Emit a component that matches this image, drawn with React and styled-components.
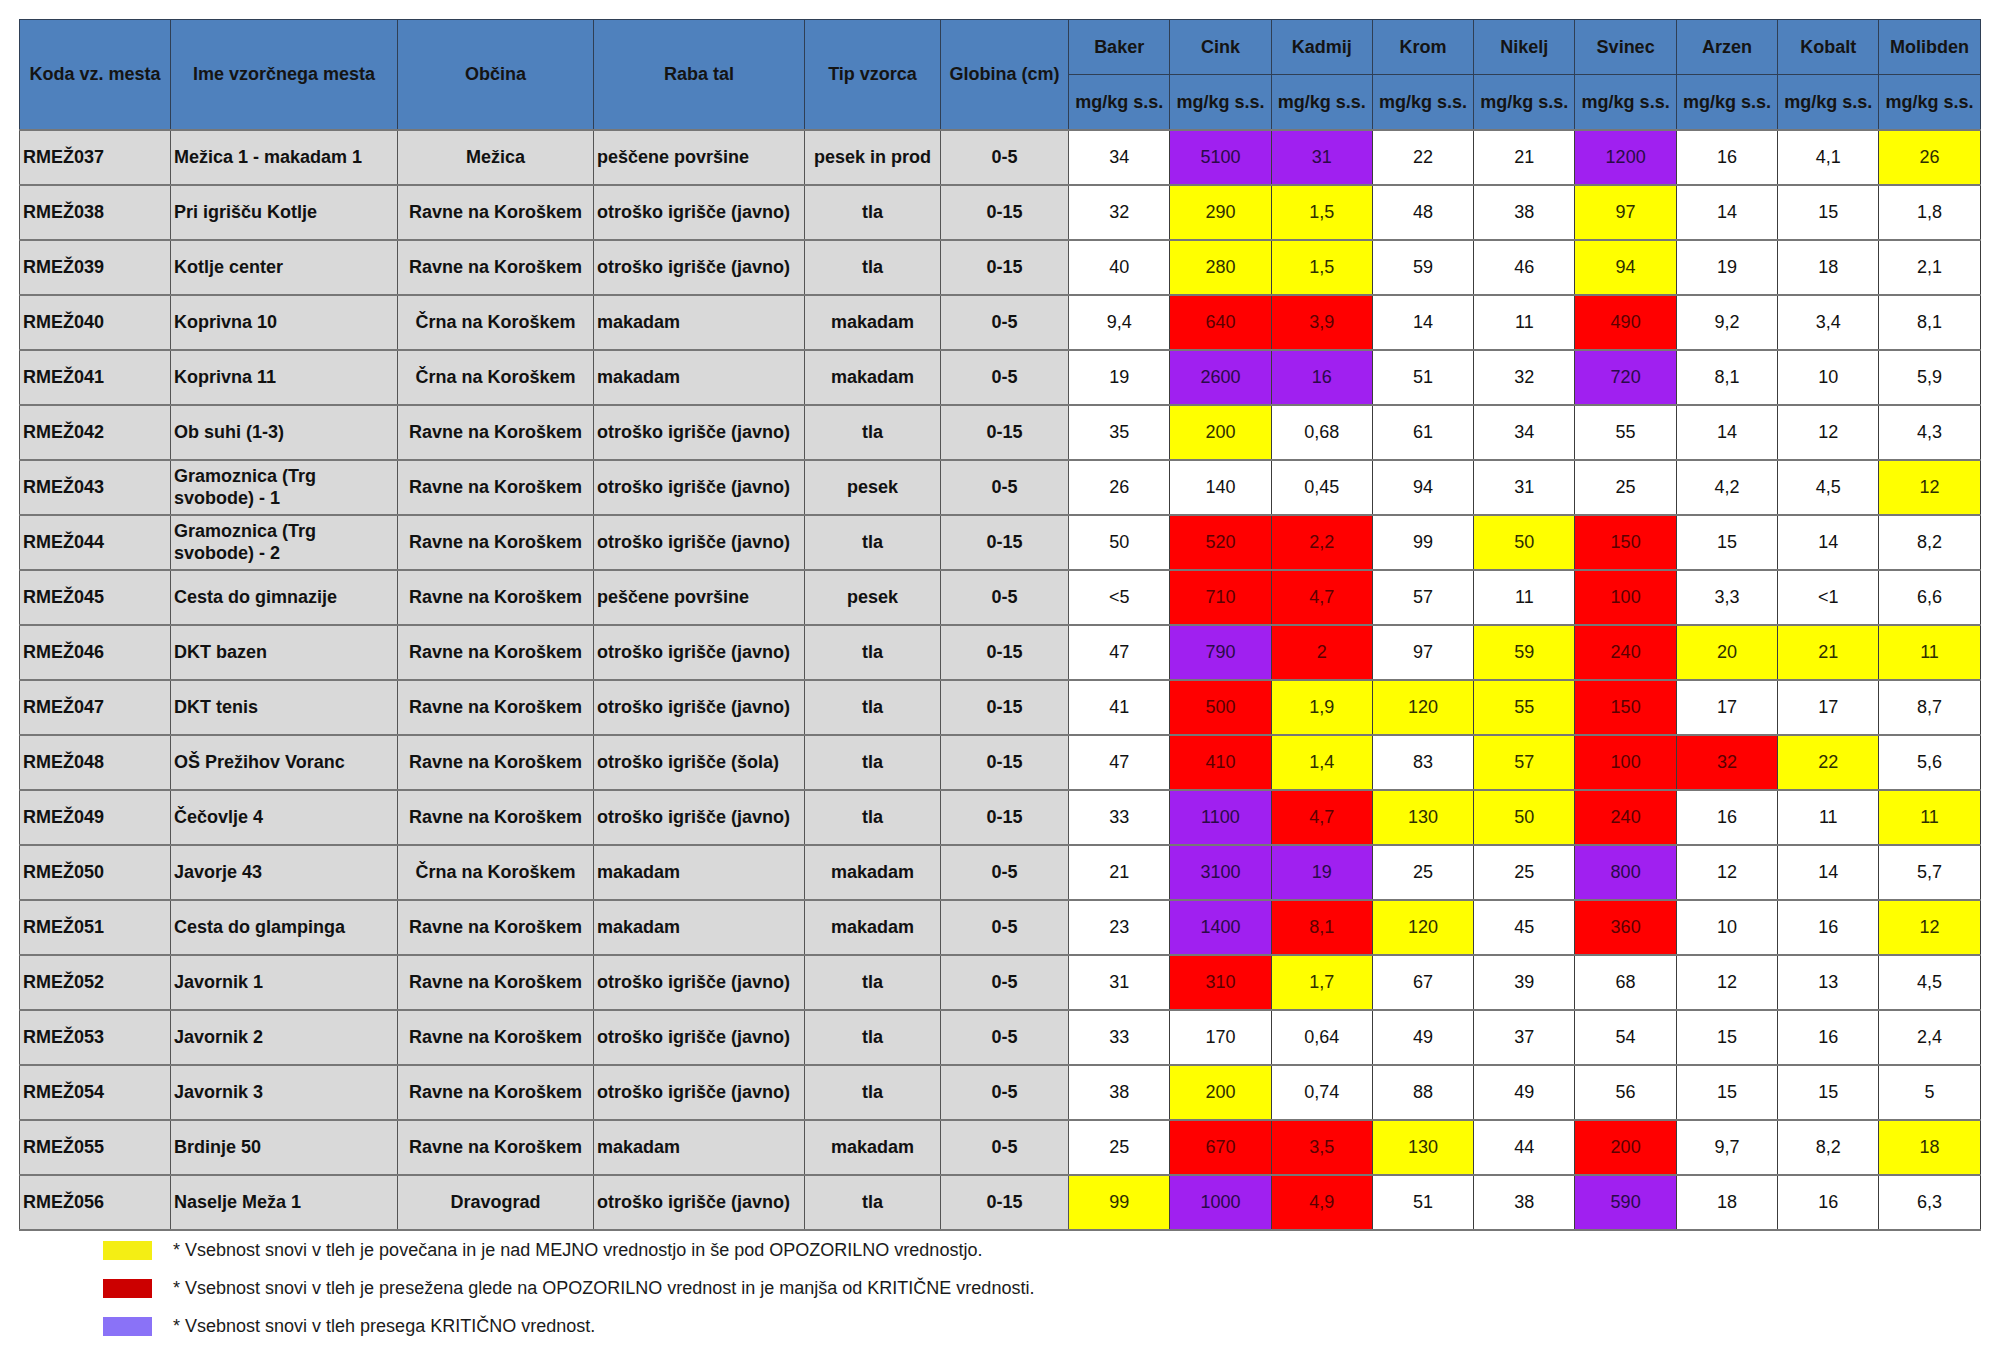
import styled, { createGlobalStyle } from "styled-components";

const GlobalStyle = createGlobalStyle`
  body {
    margin: 0;
    background: #ffffff;
    font-family: "Liberation Sans", Arial, sans-serif;
    color: #111;
  }
`;

const ELEMENTS = ["Baker", "Cink", "Kadmij", "Krom", "Nikelj", "Svinec", "Arzen", "Kobalt", "Molibden"];

const R = "Ravne na Koroškem";
const C = "Črna na Koroškem";
const OI = "otroško igrišče (javno)";

// value suffix: :y = over MEJNO, :r = over OPOZORILNO, :p = over KRITIČNO
const rows = [
  ["RMEŽ037", "Mežica 1 - makadam 1", "Mežica", "peščene površine", "pesek in prod", "0-5", "34 5100:p 31:p 22 21 1200:p 16 4,1 26:y"],
  ["RMEŽ038", "Pri igrišču Kotlje", R, OI, "tla", "0-15", "32 290:y 1,5:y 48 38 97:y 14 15 1,8"],
  ["RMEŽ039", "Kotlje center", R, OI, "tla", "0-15", "40 280:y 1,5:y 59 46 94:y 19 18 2,1"],
  ["RMEŽ040", "Koprivna 10", C, "makadam", "makadam", "0-5", "9,4 640:r 3,9:r 14 11 490:r 9,2 3,4 8,1"],
  ["RMEŽ041", "Koprivna 11", C, "makadam", "makadam", "0-5", "19 2600:p 16:p 51 32 720:p 8,1 10 5,9"],
  ["RMEŽ042", "Ob suhi (1-3)", R, OI, "tla", "0-15", "35 200:y 0,68 61 34 55 14 12 4,3"],
  ["RMEŽ043", "Gramoznica (Trg svobode) - 1", R, OI, "pesek", "0-5", "26 140 0,45 94 31 25 4,2 4,5 12:y"],
  ["RMEŽ044", "Gramoznica (Trg svobode) - 2", R, OI, "tla", "0-15", "50 520:r 2,2:r 99 50:y 150:r 15 14 8,2"],
  ["RMEŽ045", "Cesta do gimnazije", R, "peščene površine", "pesek", "0-5", "<5 710:r 4,7:r 57 11 100:r 3,3 <1 6,6"],
  ["RMEŽ046", "DKT bazen", R, OI, "tla", "0-15", "47 790:p 2:r 97 59:y 240:r 20:y 21:y 11:y"],
  ["RMEŽ047", "DKT tenis", R, OI, "tla", "0-15", "41 500:r 1,9:y 120:y 55:y 150:r 17 17 8,7"],
  ["RMEŽ048", "OŠ Prežihov Voranc", R, "otroško igrišče (šola)", "tla", "0-15", "47 410:r 1,4:y 83 57:y 100:r 32:r 22:y 5,6"],
  ["RMEŽ049", "Čečovlje 4", R, OI, "tla", "0-15", "33 1100:p 4,7:r 130:y 50:y 240:r 16 11 11:y"],
  ["RMEŽ050", "Javorje 43", C, "makadam", "makadam", "0-5", "21 3100:p 19:p 25 25 800:p 12 14 5,7"],
  ["RMEŽ051", "Cesta do glampinga", R, "makadam", "makadam", "0-5", "23 1400:p 8,1:r 120:y 45 360:r 10 16 12:y"],
  ["RMEŽ052", "Javornik 1", R, OI, "tla", "0-5", "31 310:r 1,7:y 67 39 68 12 13 4,5"],
  ["RMEŽ053", "Javornik 2", R, OI, "tla", "0-5", "33 170 0,64 49 37 54 15 16 2,4"],
  ["RMEŽ054", "Javornik 3", R, OI, "tla", "0-5", "38 200:y 0,74 88 49 56 15 15 5"],
  ["RMEŽ055", "Brdinje 50", R, "makadam", "makadam", "0-5", "25 670:r 3,5:r 130:y 44 200:r 9,7 8,2 18:y"],
  ["RMEŽ056", "Naselje Meža 1", "Dravograd", OI, "tla", "0-15", "99:y 1000:p 4,9:r 51 38 590:p 18 16 6,3"],
];

const App = () => {
  return (
    <Page>
      <GlobalStyle />
      <Table>
        <colgroup>
          <col style={{ width: 151 }} />
          <col style={{ width: 227 }} />
          <col style={{ width: 196 }} />
          <col style={{ width: 211 }} />
          <col style={{ width: 136 }} />
          <col style={{ width: 128 }} />
          {ELEMENTS.map((e) => (
            <col key={e} style={{ width: 101.3 }} />
          ))}
        </colgroup>
        <thead>
          <tr>
            <HeadCell rowSpan={2}>Koda vz. mesta</HeadCell>
            <HeadCell rowSpan={2}>Ime vzorčnega mesta</HeadCell>
            <HeadCell rowSpan={2}>Občina</HeadCell>
            <HeadCell rowSpan={2}>Raba tal</HeadCell>
            <HeadCell rowSpan={2}>Tip vzorca</HeadCell>
            <HeadCell rowSpan={2}>Globina (cm)</HeadCell>
            {ELEMENTS.map((e) => (
              <HeadCell key={e}>{e}</HeadCell>
            ))}
          </tr>
          <tr>
            {ELEMENTS.map((e) => (
              <HeadCell key={e}>mg/kg s.s.</HeadCell>
            ))}
          </tr>
        </thead>
        <tbody>
          {rows.map((r) => (
            <Row key={r[0]}>
              <InfoCell>{r[0]}</InfoCell>
              <InfoCell>{r[1]}</InfoCell>
              <InfoCell $center>{r[2]}</InfoCell>
              <InfoCell>{r[3]}</InfoCell>
              <InfoCell $center>{r[4]}</InfoCell>
              <InfoCell $center>{r[5]}</InfoCell>
              {r[6].split(" ").map((v, i) => {
                const [num, level] = v.split(":");
                return (
                  <ValueCell key={i} $level={level}>
                    {num}
                  </ValueCell>
                );
              })}
            </Row>
          ))}
        </tbody>
      </Table>

      <Legend>
        <LegendRow>
          <Swatch $color="#f4ee14" />
          <LegendText>* Vsebnost snovi v tleh je povečana in je nad MEJNO vrednostjo in še pod OPOZORILNO vrednostjo.</LegendText>
        </LegendRow>
        <LegendRow>
          <Swatch $color="#cc0000" />
          <LegendText>* Vsebnost snovi v tleh je presežena glede na OPOZORILNO vrednost in je manjša od KRITIČNE vrednosti.</LegendText>
        </LegendRow>
        <LegendRow>
          <Swatch $color="#8a72f7" />
          <LegendText>* Vsebnost snovi v tleh presega KRITIČNO vrednost.</LegendText>
        </LegendRow>
      </Legend>
    </Page>
  );
};

export default App;

const levelBg = { y: "#ffff00", r: "#ff0000", p: "#a020f0" };
const levelText = { y: "#2e2e00", r: "#5a0000", p: "#2a0a48" };

const Page = styled.div`
  padding: 19px 0 0 19px;
`;

const Table = styled.table`
  border-collapse: collapse;
  table-layout: fixed;
  width: 1961px;
  font-size: 18px;
  border: 1px solid #3c3c3c;
`;

const HeadCell = styled.th`
  background-color: #4f81bd;
  color: #141414;
  font-weight: bold;
  text-align: center;
  height: 54px;
  padding: 0 2px;
  border: 1px solid #2f3f55;
  white-space: nowrap;
`;

const Row = styled.tr`
  height: 55px;
`;

const InfoCell = styled.td`
  background-color: #d9d9d9;
  font-weight: bold;
  text-align: ${(p) => (p.$center ? "center" : "left")};
  padding: 0 3px;
  line-height: 1.2;
  border-left: 1px solid #555;
  border-right: 1px solid #555;
  border-top: 2px solid #777;
  border-bottom: 2px solid #777;
`;

const ValueCell = styled.td`
  background-color: ${(p) => levelBg[p.$level] || "#ffffff"};
  color: ${(p) => levelText[p.$level] || "#111"};
  text-align: center;
  padding: 0 2px;
  border-left: 1px solid #3c3c3c;
  border-right: 1px solid #3c3c3c;
  border-top: 2px solid #777;
  border-bottom: 2px solid #777;
`;

const Legend = styled.div`
  display: flex;
  flex-direction: column;
  gap: 17px;
  margin-top: 9px;
  padding-left: 84px;
`;

const LegendRow = styled.div`
  display: flex;
  align-items: center;
  gap: 21px;
`;

const Swatch = styled.div`
  width: 49px;
  height: 19px;
  background-color: ${(p) => p.$color};
  flex-shrink: 0;
`;

const LegendText = styled.span`
  font-size: 18px;
  line-height: 21px;
  color: #1a1a1a;
`;
